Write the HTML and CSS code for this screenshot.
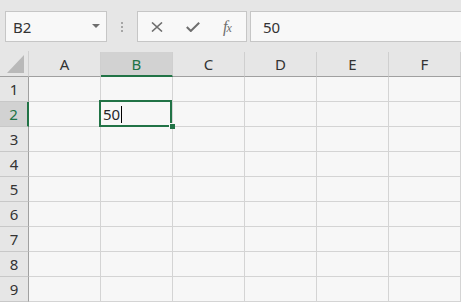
FILE: index.html
```html
<!DOCTYPE html>
<html lang="en">
<head>
    <meta charset="UTF-8">
    <title>Sheet1 - Excel</title>
    <link rel="stylesheet" href="styles.css">
</head>
<body>
    <div class="toolbar">
        <div class="namebox">
            <span>B2</span>
            <svg class="caret" width="8" height="4" viewBox="0 0 8 4"><path d="M0 0h8L4 4z" fill="#6e6e6e"/></svg>
        </div>
        <div class="grip"><i></i><i></i><i></i></div>
        <div class="fxbox">
            <svg width="12" height="10" viewBox="0 0 12 10"><path d="M1 0.5l10 9M11 0.5l-10 9" stroke="#6e6e6e" stroke-width="1.6" fill="none"/></svg>
            <svg width="14" height="10" viewBox="0 0 14 10"><path d="M0.8 5l4 4L13.2 0.8" stroke="#6e6e6e" stroke-width="2" fill="none"/></svg>
            <span class="fx"><i>f</i><i>x</i></span>
        </div>
        <div class="formula">50</div>
    </div>

    <div class="sheet">
        <div class="corner"><svg width="18" height="18" viewBox="0 0 18 18"><path d="M17 0V18H0z" fill="#b9b9b9"/></svg></div>
        <div class="colhead">A</div>
        <div class="colhead active">B</div>
        <div class="colhead">C</div>
        <div class="colhead">D</div>
        <div class="colhead">E</div>
        <div class="colhead">F</div>

        <div class="rowhead">1</div>
        <div class="cell"></div><div class="cell"></div><div class="cell"></div><div class="cell"></div><div class="cell"></div><div class="cell"></div>

        <div class="rowhead active">2</div>
        <div class="cell"></div>
        <div class="cell selected"><span class="value">50</span><span class="caretline"></span><span class="frame"></span><span class="handle"></span></div>
        <div class="cell"></div><div class="cell"></div><div class="cell"></div><div class="cell"></div>

        <div class="rowhead">3</div>
        <div class="cell"></div><div class="cell"></div><div class="cell"></div><div class="cell"></div><div class="cell"></div><div class="cell"></div>
        <div class="rowhead">4</div>
        <div class="cell"></div><div class="cell"></div><div class="cell"></div><div class="cell"></div><div class="cell"></div><div class="cell"></div>
        <div class="rowhead">5</div>
        <div class="cell"></div><div class="cell"></div><div class="cell"></div><div class="cell"></div><div class="cell"></div><div class="cell"></div>
        <div class="rowhead">6</div>
        <div class="cell"></div><div class="cell"></div><div class="cell"></div><div class="cell"></div><div class="cell"></div><div class="cell"></div>
        <div class="rowhead">7</div>
        <div class="cell"></div><div class="cell"></div><div class="cell"></div><div class="cell"></div><div class="cell"></div><div class="cell"></div>
        <div class="rowhead">8</div>
        <div class="cell"></div><div class="cell"></div><div class="cell"></div><div class="cell"></div><div class="cell"></div><div class="cell"></div>
        <div class="rowhead">9</div>
        <div class="cell"></div><div class="cell"></div><div class="cell"></div><div class="cell"></div><div class="cell"></div><div class="cell"></div>
    </div>
</body>
</html>
```

FILE: styles.css
```css
body {
    margin: 0;
    background: #e6e6e6;
    font-family: "Noto Sans", "Liberation Sans", sans-serif;
    color: #262626;
    overflow: hidden;
    width: 461px;
    height: 302px;
}
.toolbar {
    display: flex;
    align-items: stretch;
    height: 31px;
    padding: 11px 0 0 5px;
    margin-bottom: 9px;
    border-top: 1px solid #eeeeee;
    margin-top: -1px;
}
.namebox {
    width: 102px;
    background: #f8f8f8;
    border: 1px solid #c6c6c6;
    display: flex;
    align-items: center;
    justify-content: space-between;
    padding: 0 6px 0 7px;
    box-sizing: border-box;
    font-size: 15px;
    color: #333;
}
.namebox .caret {
    margin-top: -2px;
}
.grip {
    width: 30px;
    display: flex;
    flex-direction: column;
    align-items: center;
    justify-content: center;
    gap: 2px;
}
.grip i {
    width: 2px;
    height: 2px;
    background: #a6a6a6;
}
.fxbox {
    width: 110px;
    background: #f8f8f8;
    border: 1px solid #c6c6c6;
    box-sizing: border-box;
    display: flex;
    align-items: center;
    padding: 0 0 0 13px;
    gap: 23px;
}
.fx {
    font-family: "Liberation Serif", serif;
    font-style: italic;
    font-size: 16px;
    color: #6e6e6e;
    letter-spacing: -1px;
}
.fx i:last-child {
    font-size: 12px;
}
.formula {
    flex: 1;
    margin-left: 3px;
    margin-right: -4px;
    background: #f8f8f8;
    border: 1px solid #c6c6c6;
    display: flex;
    align-items: center;
    padding-left: 12px;
    font-size: 15px;
    color: #333;
}
.sheet {
    display: grid;
    grid-template-columns: 29px repeat(6, 72px);
    grid-template-rows: 26px repeat(9, 25px);
    font-size: 15px;
}
.corner {
    border-right: 1px solid #d0d0d0;
    border-bottom: 1px solid #a0a0a0;
    display: flex;
    align-items: flex-end;
    justify-content: flex-end;
    padding: 0 3px 3px 0;
}
.colhead {
    border-right: 1px solid #cfcfcf;
    border-bottom: 1px solid #a0a0a0;
    display: flex;
    align-items: center;
    justify-content: center;
    color: #333;
    margin-top: 1px;
}
.colhead.active {
    background: #d2d2d2;
    color: #217346;
    border-bottom: 2px solid #217346;
}
.rowhead {
    border-right: 1px solid #a0a0a0;
    border-bottom: 1px solid #c8c8c8;
    display: flex;
    align-items: center;
    justify-content: center;
    color: #333;
}
.rowhead.active {
    background: #d2d2d2;
    color: #217346;
    border-right: 2px solid #217346;
}
.cell {
    background: #f7f7f7;
    border-right: 1px solid #d4d4d4;
    border-bottom: 1px solid #d4d4d4;
}
.cell.selected {
    position: relative;
    display: flex;
    align-items: center;
    padding-left: 2px;
}
.caretline {
    width: 1px;
    height: 17px;
    background: #000;
    margin-left: 1px;
}
.frame {
    position: absolute;
    left: -2px;
    top: -2px;
    right: 0;
    bottom: -1px;
    border: 2px solid #217346;
}
.handle {
    position: absolute;
    right: -3px;
    bottom: -3px;
    width: 5px;
    height: 5px;
    background: #217346;
    border-left: 1px solid #f7f7f7;
    border-top: 1px solid #f7f7f7;
}
```
